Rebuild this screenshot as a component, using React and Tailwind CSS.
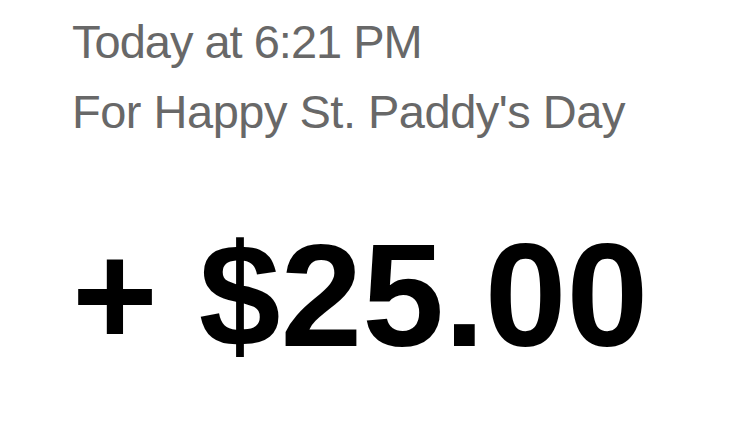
import React from "react";

const App = () => {
  return (
    <div className="w-[744px] h-[434px] bg-white pl-[72px] pt-[7px] font-['Liberation_Sans',Arial,sans-serif]">
      <div className="text-[47px] leading-[70px] text-[#686868]">
        <p className="tracking-[-1px]">Today at 6:21 PM</p>
        <p className="tracking-[-0.5px]">For Happy St. Paddy's Day</p>
      </div>
      <h1 className="mt-[75px] text-[147px] leading-[147px] font-bold text-black whitespace-nowrap">
        + $25.00
      </h1>
    </div>
  );
};

export default App;
